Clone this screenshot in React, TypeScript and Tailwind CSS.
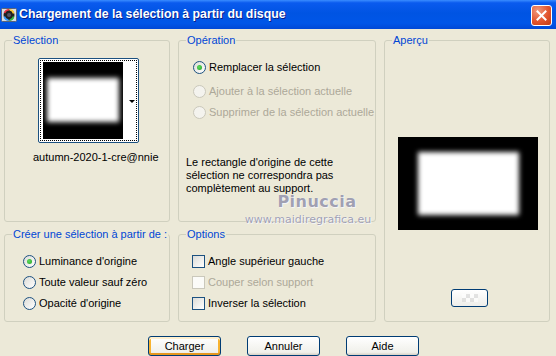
import React from "react";

const FONT = "font-['Liberation_Sans',Arial,sans-serif]";

function GroupBox({
  label,
  className = "",
  children,
}: {
  label: string;
  className?: string;
  children?: React.ReactNode;
}) {
  return (
    <div className={`relative rounded-[3px] border border-[#D0D0BF] ${className}`}>
      <span className="absolute -top-[7px] left-[7px] bg-[#ECE9D8] px-[1px] text-[11px] leading-[13px] text-[#0046D5]">
        {label}
      </span>
      {children}
    </div>
  );
}

function Radio({ checked = false, disabled = false }: { checked?: boolean; disabled?: boolean }) {
  return (
    <span
      className={`flex h-[13px] w-[13px] shrink-0 items-center justify-center rounded-full border ${
        disabled
          ? "border-[#CAC8BB] bg-[#F4F3EE]"
          : "border-[#1C5180] bg-[linear-gradient(135deg,#DCDCD7,#FFFFFF)]"
      }`}
    >
      {checked && (
        <span className="h-[5px] w-[5px] rounded-full bg-[radial-gradient(circle_at_40%_40%,#5EDB5E,#21A121)]" />
      )}
    </span>
  );
}

function Check({ disabled = false }: { disabled?: boolean }) {
  return (
    <span
      className={`block h-[13px] w-[13px] shrink-0 border ${
        disabled
          ? "border-[#CAC8BB] bg-[#FBFBF8]"
          : "border-[#1C5180] bg-[linear-gradient(135deg,#DCDCD7,#FFFFFF)]"
      }`}
    />
  );
}

function Row({
  control,
  text,
  disabled = false,
  className = "",
}: {
  control: React.ReactNode;
  text: string;
  disabled?: boolean;
  className?: string;
}) {
  return (
    <div className={`flex h-[13px] items-center gap-[3px] ${className}`}>
      {control}
      <span
        className={`whitespace-nowrap text-[11px] leading-[13px] ${
          disabled ? "text-[#ACA899]" : "text-black"
        }`}
      >
        {text}
      </span>
    </div>
  );
}

function XpButton({ label, isDefault = false }: { label: string; isDefault?: boolean }) {
  return (
    <button
      className={`flex h-[20px] w-[73px] items-center justify-center rounded-[3px] border border-[#003C74] bg-[linear-gradient(to_bottom,#FFFFFF,#F0F0EA_85%,#D6D0C5)] text-[11px] text-black ${
        isDefault
          ? "shadow-[inset_0_2px_0_#FFF0CF,inset_0_-2px_0_#E5971F,inset_2px_0_0_#F8B330,inset_-2px_0_0_#F8B330]"
          : ""
      }`}
    >
      {label}
    </button>
  );
}

function Preview({ className = "" }: { className?: string }) {
  return (
    <div className={`overflow-hidden bg-black ${className}`}>
      <div className="h-full w-full bg-white blur-[2.5px]" />
    </div>
  );
}

export default function App() {
  return (
    <div className={`relative h-[356px] w-[556px] overflow-hidden bg-[#ECE9D8] ${FONT}`}>
      {/* title bar */}
      <div className="flex h-[29px] items-center bg-[linear-gradient(to_bottom,#3A8CFF_0%,#0A5AEE_10%,#0054E3_45%,#0056E8_80%,#0048D6_100%)] pl-[1px] pr-[4px]">
        <svg width="17" height="16" viewBox="0 0 17 16" className="mt-[1px]">
          <rect x="0.5" y="1.5" width="15" height="13" rx="1" fill="#D8DCE4" stroke="#5A6478" />
          <circle cx="8" cy="8" r="5.5" fill="#222" />
          <path d="M3.5 6 A5 5 0 0 1 8 2.8" stroke="#E34" strokeWidth="1.6" fill="none" />
          <path d="M8.5 2.8 A5 5 0 0 1 12.7 6.5" stroke="#FC3" strokeWidth="1.6" fill="none" />
          <path d="M12.6 9.5 A5 5 0 0 1 8.5 13.2" stroke="#3B4" strokeWidth="1.6" fill="none" />
          <path d="M7.5 13.2 A5 5 0 0 1 3.3 9.5" stroke="#39F" strokeWidth="1.6" fill="none" />
          <circle cx="8" cy="8" r="2" fill="#556" />
        </svg>
        <span className="ml-[1px] text-[12.3px] font-bold text-white [text-shadow:1px_1px_0_#0A1E8C]">
          Chargement de la sélection à partir du disque
        </span>
        <div className="ml-auto mt-[2px] flex h-[21px] w-[21px] items-center justify-center rounded-[3px] border border-white bg-[radial-gradient(circle_at_30%_25%,#F09A7E,#E2552E_55%,#C23A12)]">
          <svg width="11" height="11" viewBox="0 0 11 11">
            <path d="M1.5 1.5 L9.5 9.5 M9.5 1.5 L1.5 9.5" stroke="white" strokeWidth="2" strokeLinecap="square" />
          </svg>
        </div>
      </div>

      {/* groups */}
      <div className="ml-[4px] mt-[11px] grid grid-cols-[166px_198px_166px] grid-rows-[182px_88px] gap-x-[8px] gap-y-[12px]">
        <GroupBox label="Sélection">
          <div className="ml-[33px] mt-[17px] h-[85px] w-[101px] rounded-[2px] border border-[#1C5180] bg-white p-[1px]">
            <div className="flex h-full border border-dotted border-black pl-[2px] pt-[1px]">
              <Preview className="h-[77px] w-[80px] px-[4px] pb-[17px] pt-[16px]" />
              <div className="flex flex-1 items-center justify-end pr-[1px]">
                <span className="h-0 w-0 border-x-[3px] border-t-[3px] border-x-transparent border-t-black" />
              </div>
            </div>
          </div>
          <div className="mt-[8px] pl-[28px] text-[11px] leading-[13px] text-black">autumn-2020-1-cre@nnie</div>
        </GroupBox>

        <GroupBox label="Opération">
          <div className="pl-[14px] pt-[20px]">
            <Row control={<Radio checked />} text="Remplacer la sélection" />
            <Row control={<Radio disabled />} text="Ajouter à la sélection actuelle" disabled className="mt-[11px]" />
            <Row control={<Radio disabled />} text="Supprimer de la sélection actuelle" disabled className="mt-[8px]" />
          </div>
          <p className="mt-[37px] pl-[7px] text-[11px] leading-[13px] text-black">
            Le rectangle d'origine de cette
            <br />
            sélection ne correspondra pas
            <br />
            complètement au support.
          </p>
        </GroupBox>

        <GroupBox label="Aperçu" className="row-span-2">
          <Preview className="ml-[13px] mt-[96px] h-[93px] w-[140px] pb-[15px] pl-[20px] pr-[19px] pt-[15px]" />
          <div className="ml-[66px] mt-[59px] flex h-[18px] w-[37px] items-center justify-center rounded-[3px] border border-[#003C74] bg-[linear-gradient(to_bottom,#FFFFFF,#EEEEEA)]">
            <div className="grid grid-cols-4 opacity-60">
              {[0, 1, 2, 3, 4, 5, 6, 7].map((i) => (
                <span
                  key={i}
                  className={`h-[4px] w-[4px] ${(i + Math.floor(i / 4)) % 2 ? "bg-[#D4D4D4]" : "bg-white"}`}
                />
              ))}
            </div>
          </div>
        </GroupBox>

        <GroupBox label="Créer une sélection à partir de :">
          <div className="pl-[18px] pt-[20px]">
            <Row control={<Radio checked />} text="Luminance d'origine" />
            <Row control={<Radio />} text="Toute valeur sauf zéro" className="mt-[8px]" />
            <Row control={<Radio />} text="Opacité d'origine" className="mt-[8px]" />
          </div>
        </GroupBox>

        <GroupBox label="Options">
          <div className="pl-[13px] pt-[20px]">
            <Row control={<Check />} text="Angle supérieur gauche" />
            <Row control={<Check disabled />} text="Couper selon support" disabled className="mt-[8px]" />
            <Row control={<Check />} text="Inverser la sélection" className="mt-[8px]" />
          </div>
        </GroupBox>
      </div>

      {/* buttons */}
      <div className="mt-[14px] flex gap-[26px] pl-[148px]">
        <XpButton label="Charger" isDefault />
        <XpButton label="Annuler" />
        <XpButton label="Aide" />
      </div>

      {/* watermark */}
      <div className="pointer-events-none absolute left-[248px] top-[196px] flex w-[120px] flex-col items-center font-['DejaVu_Sans',sans-serif] text-[#A0A0B2] [text-shadow:0_0_1px_#fff,1px_1px_0_#F4F4F4]">
        <span className="pl-[18px] text-[16px] font-bold leading-[12px] tracking-[0.5px]">Pinuccia</span>
        <span className="mt-[6px] text-[11px] leading-[12px]">www.maidiregrafica.eu</span>
      </div>
    </div>
  );
}
